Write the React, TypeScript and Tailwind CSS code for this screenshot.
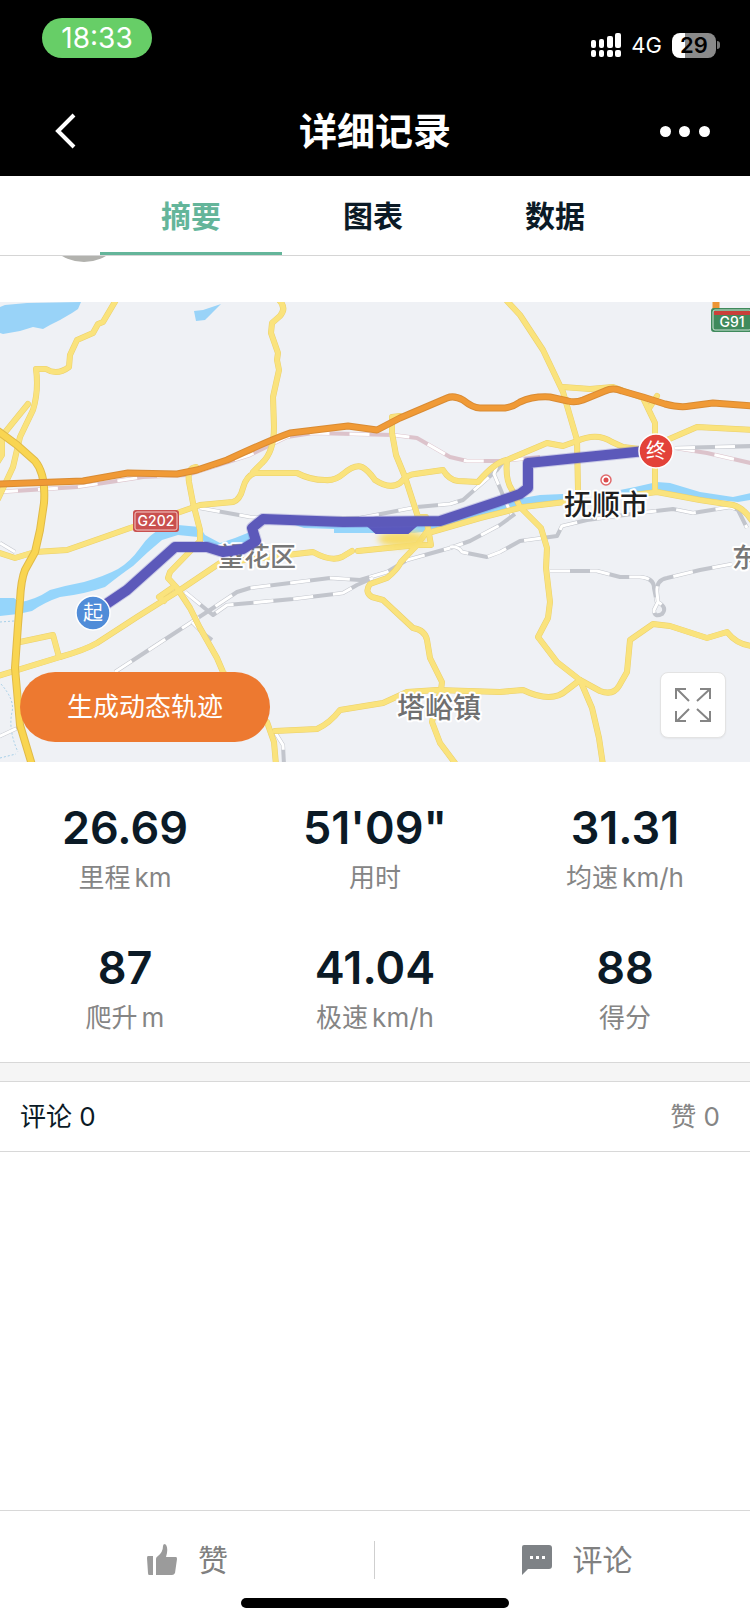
import { useState } from "react";
import clsx from "clsx";

interface Stat {
    value: string;
    label: string;
    unit?: string;
}

const TABS = ["摘要", "图表", "数据"];

const STATS: Stat[] = [
    { value: "26.69", label: "里程", unit: "km" },
    { value: "51'09\"", label: "用时" },
    { value: "31.31", label: "均速", unit: "km/h" },
    { value: "87", label: "爬升", unit: "m" },
    { value: "41.04", label: "极速", unit: "km/h" },
    { value: "88", label: "得分" },
];

const RIVERS = [
    "M0 598L14 598L20 602Q35 600 50 590Q68 585 84 582Q105 576 118 569Q130 562 140 548Q150 533 162 529L178 525L200 527L205 535L220 543L235 538L250 532L256 541L243 549L223 554L213 548L198 537L178 535L162 540L148 552L133 566Q120 575 105 587Q85 594 60 597Q45 602 32 611L18 614L0 616Z",
    "M283 521L343 523L430 523L500 502L540 495L563 494L563 502L535 504L500 512L470 520L430 531L414 533L334 533L334 529L304 528Z",
    "M620 490L635 487L657 482L670 483L700 492L733 497L755 492L755 499L738 502L700 498L657 490L620 495Z",
];

const ROADS = [
    "M116 300L103 322L98 324L93 333L77 340L70 355L69 367Q57 376 46 369L36 369Q39 390 33 410L20 437L13 467L-2 499",
    "M28 404L2 436L2 455L-3 463",
    "M0 553L15 558L35 552L67 550L130 528L180 512L200 505L233 502Q240 500 243 488Q246 476 255 473L297 473Q310 480 325 480Q335 481 343 474Q355 464 362 467Q368 470 375 480Q390 490 400 483Q408 474 415 474L443 470Q449 480 458 481L478 482Q495 462 507 460L547 443L563 446L577 441Q597 432 612 442L623 447L647 450L667 440L697 427L755 430",
    "M279 300Q287 308 280 316L272 323L271 333L278 353L277 360L279 370L273 397L274 427Q274 452 262 463L253 472",
    "M196 467Q187 468 189 482L193 503L200 530L200 541L170 572L168 578L177 588L190 608L200 628L217 658L223 672L255 712L267 722L274 742L276 765",
    "M-2 676L60 657Q85 650 97 643L137 617L180 590L220 563L270 557L313 552Q331 562 342 557L352 551",
    "M20 642L53 635L59 657",
    "M172 588L159 597L164 601",
    "M400 416L392 417L392 433L396 455L405 477L418 517L426 517L431 545L417 545L428 530",
    "M358 551L417 545L401 562Q397 570 387 578L370 584Q364 592 372 597L383 600L413 628Q425 630 427 640L430 658L442 682L441 690L436 705L432 722L440 743L455 763",
    "M275 731L317 729Q330 723 340 710L383 703L407 692L437 690L500 692L523 690Q552 704 567 690L580 680L600 691Q613 696 619 686L627 672L630 640L653 624L670 626L707 638L727 632Q738 646 755 646",
    "M507 301L520 315L543 350L563 392L577 440L578 490",
    "M563 387L590 389L613 387L643 398L655 423L655 490",
    "M657 396L650 407",
    "M428 533L480 518L523 507L565 502",
    "M633 495L657 492L700 500L733 505Q744 508 753 522",
    "M507 460Q505 480 512 490L520 507L541 528L547 548L546 568L550 602L548 618L538 637L557 662L580 680L592 708L599 738L603 765",
];

const PINK_RAILS = [
    "M-2 492L77 487L143 477L187 475L250 455L287 437L313 433L393 435L417 438L450 457L467 461L500 461L540 457",
    "M675 448L707 453L755 464",
];

const RAILS = [
    "M200 508L250 517L310 519L360 518L417 507L450 504L463 500L497 470L503 462",
    "M497 466L494 474L505 500L512 516",
    "M115 672L187 625L213 608L237 592L250 588L330 578L360 580L387 572L407 560L450 548L470 541L500 525L515 514",
    "M185 592L213 615L227 605L250 603L293 599L343 593L357 585L373 578",
    "M450 547Q458 546 462 552L487 557L500 552L520 541L557 536L562 526L587 520L647 512L673 509L693 513L730 507L738 510L747 528",
    "M550 571L597 571L620 577L640 577Q654 578 654 588L657 603",
    "M732 564L700 570L667 578Q656 580 657 592L658 602Q668 608 662 614Q654 618 654 610L658 602",
    "M675 448L755 446",
    "M192 622L205 635L212 640",
    "M275 732L283 745L284 765",
    "M0 543L15 552",
    "M-2 737L22 726",
];

const TRACK =
    "M93 613L127 590L175 547L207 547L223 552L243 549L256 541L252 528L263 519L343 522L440 521L497 502L520 494L528 488L528 463L567 459L655 450";

const RING_ROAD =
    "M-2 431L17 445L35 461Q46 474 44 503L40 530L35 552L25 570Q21 580 20 600L18 625L15 668L20 725L32 765";

const HIGHWAY =
    "M-2 484L83 481L128 473L177 474L197 470L227 460Q270 440 290 433L348 426L377 430L400 418L447 398Q454 395 463 400Q473 408 480 408L505 408Q513 407 520 402Q533 396 550 397L568 401Q575 403 583 400L605 391Q613 387 622 391L643 397L665 404Q680 408 690 406L713 403L755 406";

const Rail = ({ d, color }: { d: string; color: string }) => (
    <g fill="none" strokeLinejoin="round">
        <path d={d} stroke={color} strokeWidth="4" />
        <path d={d} stroke="#fff" strokeWidth="3" strokeDasharray="20 20" />
    </g>
);

interface MapLabelProps {
    x: number;
    y: number;
    size: number;
    color: string;
    text: string;
}

const MapLabel = ({ x, y, size, color, text }: MapLabelProps) => (
    <text
        x={x}
        y={y}
        fontSize={size}
        fontWeight="500"
        fill={color}
        stroke="#fff"
        strokeWidth="4"
        strokeLinejoin="round"
        paintOrder="stroke"
    >
        {text}
    </text>
);

const TrackMap = () => (
    <svg
        viewBox="0 302 750 460"
        preserveAspectRatio="xMidYMid slice"
        className="block size-full"
        role="img"
        aria-label="骑行轨迹"
    >
        <defs>
            <filter id="soft" x="-20%" y="-50%" width="140%" height="200%">
                <feGaussianBlur stdDeviation="3" />
            </filter>
        </defs>
        <rect y="302" width="750" height="460" fill="#eff1f5" />

        {/* Water */}
        <path
            d="M0 307L5 305L27 303L81 302L78 309L72 313L60 320L50 325L43 329L33 327L20 331L3 334L0 333ZM194 311L203 310L221 304L213 312L207 318L205 320L196 321Z"
            fill="#99d3f8"
        />
        {RIVERS.map((d) => (
            <path key={d} d={d} fill="#95d5fb" />
        ))}
        <path
            d="M0 622L14 621M1 684Q15 700 12 712Q8 730 18 752M0 758L16 754"
            fill="none"
            stroke="#a5cfe8"
            strokeDasharray="2 2"
        />

        {/* Railways */}
        {PINK_RAILS.map((d) => (
            <Rail key={d} d={d} color="#dcc3cb" />
        ))}
        {RAILS.map((d) => (
            <Rail key={d} d={d} color="#c2c5cc" />
        ))}

        {/* Roads */}
        <g fill="none" strokeLinejoin="round" strokeLinecap="round">
            {ROADS.map((d) => (
                <path key={d} d={d} stroke="#ebd06c" strokeWidth="6" />
            ))}
            {ROADS.map((d) => (
                <path key={d} d={d} stroke="#fae37d" strokeWidth="5" />
            ))}
            <path d={RING_ROAD} stroke="#e0ba48" strokeWidth="8" />
            <path d={RING_ROAD} stroke="#f9d551" strokeWidth="6" />
            <path d={HIGHWAY} stroke="#d98b33" strokeWidth="7" />
            <path d={HIGHWAY} stroke="#f09a36" strokeWidth="5" />
            <path d="M716 298L716 310" stroke="#ed9535" strokeWidth="7" />
        </g>

        <MapLabel x={218} y={566} size={26} color="#777" text="望花区" />
        <MapLabel x={397} y={718} size={28} color="#707070" text="塔峪镇" />
        <MapLabel x={564} y={515} size={28} color="#1f1f1f" text="抚顺市" />
        <MapLabel x={732} y={567} size={26} color="#777" text="东" />
        <circle cx="606" cy="480" r="5" fill="#fff" stroke="#e06a6c" strokeWidth="1.5" />
        <circle cx="606" cy="480" r="2.5" fill="#db4b4d" />

        {/* Road numbers */}
        <rect x="133" y="510" width="46" height="22" rx="3" fill="#c9504f" />
        <rect x="135" y="512" width="42" height="18" rx="2" fill="none" stroke="#f3c9c7" />
        <text x="156" y="526" textAnchor="middle" fontSize="14" fontWeight="500" fill="#fff">
            G202
        </text>
        <rect x="711" y="308" width="42" height="24" rx="3" fill="#3f8a5c" />
        <rect x="713" y="310" width="38" height="20" rx="2" fill="none" stroke="#cfe5d7" />
        <rect x="714" y="311" width="36" height="4" fill="#c9403a" />
        <text x="732" y="327" textAnchor="middle" fontSize="14" fontWeight="500" fill="#fff">
            G91
        </text>

        {/* Ridden track */}
        <ellipse cx="402" cy="539" rx="24" ry="8" fill="#f6dc6c" filter="url(#soft)" />
        <path
            d="M366 524L376 533L408 533L418 524Z"
            fill="#5a58bd"
            stroke="#5a58bd"
            strokeWidth="2"
            strokeLinejoin="round"
        />
        <g fill="none" strokeLinejoin="round" strokeLinecap="round">
            <path d={TRACK} stroke="#6e6bc4" strokeOpacity="0.3" strokeWidth="12" />
            <path d={TRACK} stroke="#5c59ba" strokeWidth="10" />
        </g>
        <g stroke="#fff" strokeWidth="1.5">
            <circle cx="93" cy="613" r="17" fill="#508cd8" />
            <circle cx="656" cy="451" r="17" fill="#e34239" />
        </g>
        <g fill="#fff" fontSize="20" textAnchor="middle">
            <text x="93" y="620">起</text>
            <text x="656" y="458">终</text>
        </g>
    </svg>
);

const StatusBar = () => (
    <div className="flex h-[86px] items-start justify-between pt-[18px] pr-[30px] pl-[42px]">
        <div className="flex h-10 w-[110px] items-center justify-center rounded-full bg-[#67ce67] text-[28px] leading-none">
            18:33
        </div>
        <div className="flex h-[54px] items-center gap-[10px]">
            <svg width="30" height="24" viewBox="0 0 30 24" fill="#fff" aria-hidden="true">
                <rect x="0" y="7" width="5" height="8" rx="2" />
                <rect x="8" y="6" width="5" height="9" rx="2" />
                <rect x="16" y="3" width="6" height="12" rx="2" />
                <rect x="24" y="0" width="6" height="15" rx="2" />
                <rect x="0" y="17" width="5" height="7" rx="2" />
                <rect x="8" y="17" width="5" height="7" rx="2" />
                <rect x="16" y="17" width="6" height="7" rx="2" />
                <rect x="24" y="17" width="6" height="7" rx="2" />
            </svg>
            <span className="text-[22px] leading-none">4G</span>
            <div className="flex items-center gap-px">
                <div className="flex h-[25px] w-11 items-center justify-center rounded-lg bg-linear-to-r from-white from-30% to-[#8a8a8a] to-30% text-[22px] leading-none font-semibold text-black">
                    29
                </div>
                <div className="h-2 w-[3px] rounded-r-full bg-[#777]" />
            </div>
        </div>
    </div>
);

const App = () => {
    const [activeTab, setActiveTab] = useState(TABS[0]);

    return (
        <div className="flex min-h-screen flex-col bg-white font-['Inter','Noto_Sans_CJK_SC',sans-serif] text-[#0b1a26]">
            <header className="bg-black text-white">
                <StatusBar />
                <div className="flex h-[90px] items-center justify-between pr-10 pl-[54px]">
                    <button type="button" aria-label="返回" className="w-9">
                        <svg width="24" height="36" viewBox="0 0 24 36" fill="none">
                            <path d="M20 2L4 18L20 34" stroke="#fff" strokeWidth="4" />
                        </svg>
                    </button>
                    <h1 className="text-[38px] leading-none font-semibold">详细记录</h1>
                    <button type="button" aria-label="更多" className="flex w-[50px] justify-between">
                        <span className="size-[11px] rounded-full bg-white" />
                        <span className="size-[11px] rounded-full bg-white" />
                        <span className="size-[11px] rounded-full bg-white" />
                    </button>
                </div>
            </header>

            <nav className="flex h-20 border-b border-[#d5d5d5] pr-[104px] pl-[100px]" role="tablist">
                {TABS.map((tab) => (
                    <button
                        key={tab}
                        type="button"
                        role="tab"
                        aria-selected={tab === activeTab}
                        className={clsx(
                            "flex-1 border-b-3 pt-1 text-[30px] leading-none font-semibold",
                            tab === activeTab
                                ? "border-[#64b59a] text-[#64b59a]"
                                : "border-transparent"
                        )}
                        onClick={() => setActiveTab(tab)}
                    >
                        {tab}
                    </button>
                ))}
            </nav>

            {/* Avatar row, mostly scrolled out of view */}
            <div className="flex h-[46px] items-start overflow-hidden pl-[41px]">
                <div className="h-[6px] w-[86px] overflow-hidden">
                    <div className="-mt-20 size-[86px] rounded-full bg-[#b2b2ae]" />
                </div>
            </div>

            <div className="relative h-[460px] overflow-hidden">
                <TrackMap />
                <button
                    type="button"
                    className="absolute bottom-5 left-5 h-[70px] w-[250px] rounded-full bg-[#ed7930] text-[26px] leading-none text-white"
                >
                    生成动态轨迹
                </button>
                <button
                    type="button"
                    aria-label="全屏"
                    className="absolute right-6 bottom-6 flex size-[66px] items-center justify-center rounded-lg border border-[#e3e3e3] bg-white shadow-xs"
                >
                    <svg width="36" height="36" viewBox="0 0 36 36" fill="none" stroke="#858585" strokeWidth="2">
                        <path d="M1 12V2H11M2 2L14 14M25 2H35V12M35 2L22 14M1 24V34H11M2 34L14 22M25 34H35V24M35 34L22 22" />
                    </svg>
                </button>
            </div>

            <dl className="grid grid-cols-3 gap-y-[42px] pt-[38px] pb-6">
                {STATS.map(({ value, label, unit }) => (
                    <div key={label} className="flex h-[98px] flex-col-reverse items-center justify-between">
                        <dt className="flex h-10 items-center gap-1 text-[26px] leading-none text-[#858585]">
                            {label}
                            {unit && <span>{unit}</span>}
                        </dt>
                        <dd className="flex h-[54px] items-center text-[45px] leading-none font-semibold">{value}</dd>
                    </div>
                ))}
            </dl>

            <div className="h-5 border-y border-[#d8d8d8] bg-[#f5f5f5]" />
            <div className="flex h-[70px] items-center justify-between border-b border-[#d8d8d8] pr-[30px] pl-5 text-[26px] leading-none">
                <h2>评论 0</h2>
                <span className="text-[#858585]">赞 0</span>
            </div>

            <footer className="mt-auto border-t border-[#d8d8d8] text-[30px] leading-none text-[#808080]">
                <div className="flex h-[87px] items-center pt-[10px]">
                    <button type="button" className="flex h-[38px] w-1/2 items-center justify-center gap-5 border-r border-[#cfcfcf]">
                        <svg width="32" height="32" viewBox="0 0 32 32" fill="#9b9b9b" aria-hidden="true">
                            <path d="M2 12H7V31H3Q2 31 2 29L1 14Q1 12 2 12ZM10 31V15Q10 13 12 12Q17 8 17 2Q17 0 19 0Q22 2 21 9L20 13H30Q31 13 31 15L29 29Q28 31 26 31Z" />
                        </svg>
                        赞
                    </button>
                    <button type="button" className="flex h-[38px] w-1/2 items-center justify-center gap-5 pl-7">
                        <svg width="32" height="32" viewBox="0 0 32 32" aria-hidden="true">
                            <path d="M3 1H28Q31 1 31 4V22Q31 25 28 25H7L1 31V3Q1 1 3 1Z" fill="#7e8286" />
                            <path d="M9 12H12V15H9ZM15 12H18V15H15ZM21 12H24V15H21Z" fill="#fff" />
                        </svg>
                        评论
                    </button>
                </div>
                <div className="mx-auto mb-4 h-[10px] w-[268px] rounded-full bg-black" />
            </footer>
        </div>
    );
};

export default App;
